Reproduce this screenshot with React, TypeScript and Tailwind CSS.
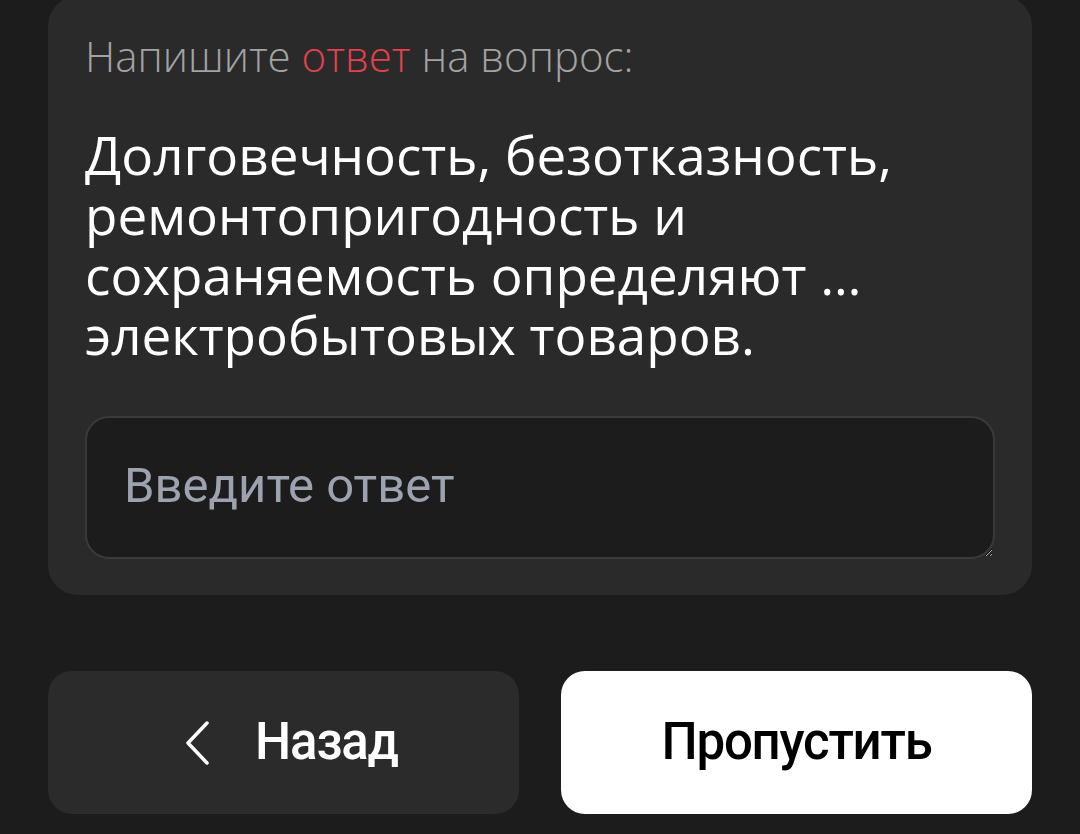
import React from 'react';

const App: React.FC = () => {
  return (
    <div
      className="w-[1080px] h-[834px] overflow-hidden bg-[#1c1c1c] px-[48px]"
      style={{ fontFamily: 'Roboto, "Liberation Sans", sans-serif' }}
    >
      <div
        className="-mt-[4px] rounded-[30px] bg-[#2a2a2a] px-[37px] pt-[35px] pb-[36px]"
        style={{ fontFamily: '"Open Sans", Roboto, sans-serif' }}
      >
        <p className="text-[42px] leading-[50px] font-light text-[#a3a3a3]">
          Напишите <span className="text-[#e2414d]">ответ</span> на вопрос:
        </p>
        <p className="mt-[44px] text-[53px] leading-[60px] text-white">
          Долговечность, безотказность,
          <br />
          ремонтопригодность и
          <br />
          сохраняемость определяют …
          <br />
          электробытовых товаров.
        </p>
        <textarea
          placeholder="Введите ответ"
          className="mt-[51px] block w-full h-[143px] rounded-[24px] border-2 border-[#3a3a3a] bg-[#1c1c1c] px-[37px] pt-[42px] text-[49px] leading-[52px] text-white placeholder:text-[#9ca3af] outline-none"
          style={{ fontFamily: 'Roboto, sans-serif' }}
        />
      </div>
      <div className="mt-[76px] grid grid-cols-2 gap-[42px]">
        <button className="h-[143px] rounded-[24px] bg-[#2b2b2b] flex items-center justify-center gap-[44px] pl-[14px] text-white text-[51px] font-medium tracking-[-1.2px]">
          <svg width="28" height="46" viewBox="0 0 28 46" fill="none">
            <polyline
              points="24,3 5,23 24,43"
              stroke="white"
              strokeWidth="3.5"
              strokeLinecap="round"
              strokeLinejoin="round"
            />
          </svg>
          <span>Назад</span>
        </button>
        <button className="h-[143px] rounded-[24px] bg-white flex items-center justify-center text-black text-[51px] font-medium tracking-[-1.2px]">
          Пропустить
        </button>
      </div>
    </div>
  );
};

export default App;
